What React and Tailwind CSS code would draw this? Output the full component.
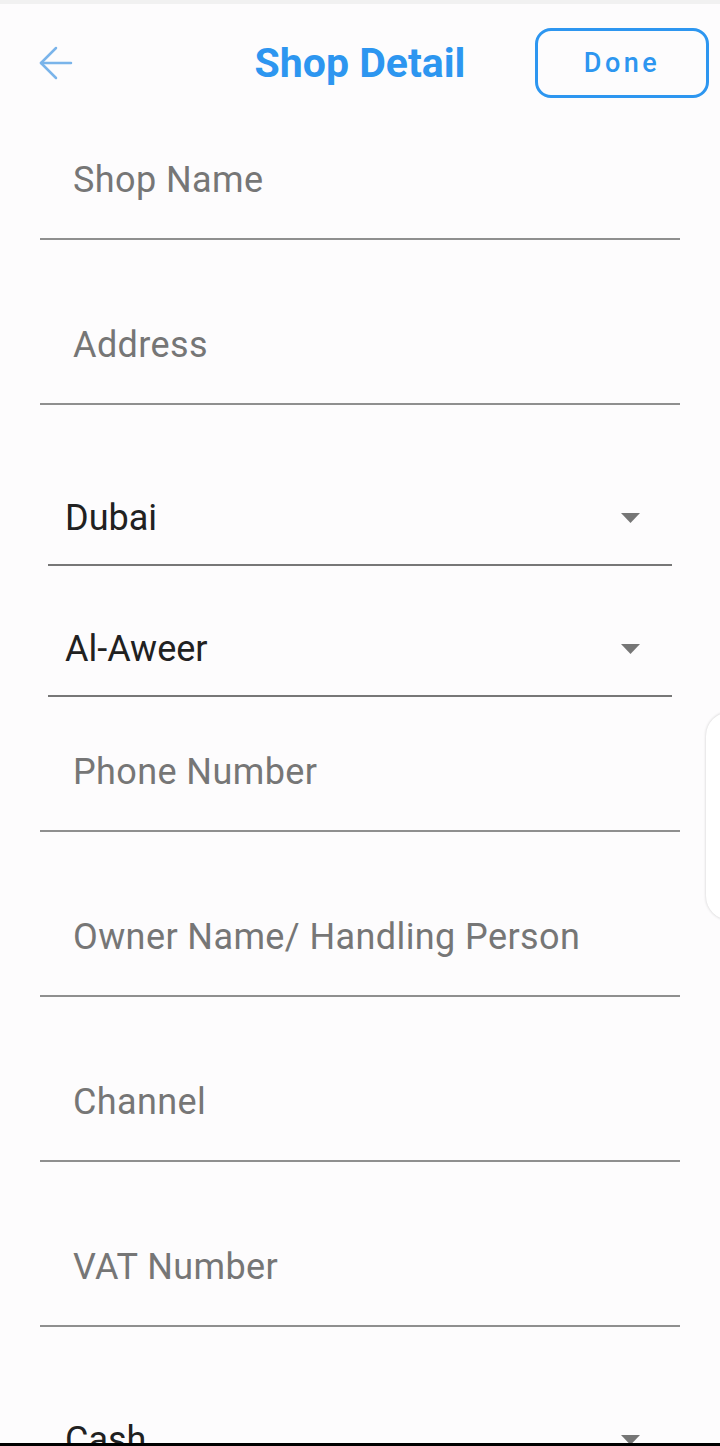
const font = { fontFamily: 'Roboto, "Noto Sans", sans-serif' };

function TextField({ label, height = 'h-[165px]' }) {
  return (
    <div className={`mx-[40px] ${height} flex flex-col justify-end border-b-2 border-[#8f8f8f] pb-[38px]`}>
      <span className="pl-[33px] text-[36px] leading-[40px] tracking-[0.4px] text-[#767676]">{label}</span>
    </div>
  );
}

function Dropdown({ value, height }) {
  return (
    <div className={`mx-[48px] ${height} flex items-end justify-between border-b-2 border-[#777777] pb-[26px]`}>
      <span className="pl-[17px] text-[36px] leading-[40px] text-[#212121]">{value}</span>
      <svg width="19" height="10" viewBox="0 0 19 10" className="mr-[32px] mb-[15px]">
        <path d="M0 0h19L9.5 10z" fill="#767676" />
      </svg>
    </div>
  );
}

export default function App() {
  return (
    <div className="relative h-[1446px] w-[720px] flex flex-col overflow-hidden bg-[#fdfcfd]" style={font}>
      <div className="h-[4px] bg-[#f1f1f1]" />
      <div className="h-[118px] grid grid-cols-[1fr_auto_1fr] items-center">
        <div className="pl-[38px]">
          <svg width="36" height="36" viewBox="0 0 24 24" fill="none" stroke="#7ab4ea" strokeWidth="1.7" strokeLinecap="round" strokeLinejoin="round">
            <path d="M22 12H2" />
            <path d="M12 2 2 12l10 10" />
          </svg>
        </div>
        <h1 className="text-[41px] font-bold text-[#2d96f0] leading-none">Shop Detail</h1>
        <div className="flex justify-end pr-[11px]">
          <button className="w-[174px] h-[70px] rounded-[16px] border-[3px] border-[#2d96f0] text-[27px] font-medium tracking-[3.5px] text-[#2d96f0]">
            Done
          </button>
        </div>
      </div>
      <div className="flex-1 overflow-hidden">
        <TextField label="Shop Name" height="h-[118px]" />
        <TextField label="Address" />
        <Dropdown value="Dubai" height="h-[161px]" />
        <Dropdown value="Al-Aweer" height="h-[131px]" />
        <TextField label="Phone Number" height="h-[135px]" />
        <TextField label="Owner Name/ Handling Person" />
        <TextField label="Channel" />
        <TextField label="VAT Number" />
        <Dropdown value="Cash" height="h-[161px]" />
      </div>
      <div className="h-[3px] bg-black" />
      <div className="absolute left-[706px] top-[712px] h-[208px] w-[60px] rounded-[24px] bg-white shadow-[0_0_3px_rgba(0,0,0,0.2)]" />
    </div>
  );
}
